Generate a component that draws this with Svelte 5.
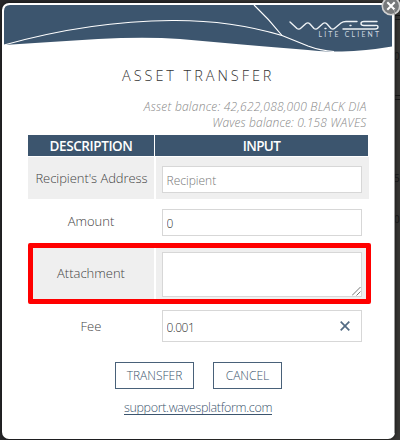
<script>
  let recipient = $state('');
  let amount = $state('0');
  let attachment = $state('');
  let fee = $state('0.001');
</script>

<div class="page">
  <div class="behind" aria-hidden="true">
    <i style="top: 15px"></i><b style="top: 50px">0</b><i style="top: 95px"></i>
    <b style="top: 172px">5</b><b style="top: 213px">0</b>
  </div>
  <div class="modal">
    <header>
      <svg width="388" height="48" viewBox="4 5 388 48">
        <path fill="#3c556e" d="M4 11Q4 5 10 5H392V46.500Q365 51 342 51.500Q325 52 296 49Q258 46 225 43L180 39Q145 36.500 98 39Q50 42 4 45Z" />
        <g fill="none" stroke="#fff">
          <path stroke-width="1.200" d="M4 45Q90 21 172 20.500Q230 20 282 35.500L308 46Q320 50.500 334 51.500" />
          <path stroke-width="1.200" d="M254 5Q269 19 282 35.500" />
          <path stroke="#eef2f5" stroke-width="1.400" stroke-linecap="round" stroke-linejoin="round" d="M290 22L297 28.500Q299 30 301 28L306 23.500Q308 22 310 24L314 28.500Q316 30 318 28L323 23.500Q325 22 327 24L331 28.500Q333 30 335 28L341 23Q343 21.500 346 21.500H357M343 29H375Q378 29 378 27T375 25.500H364Q361 25.500 361 23.500T364 21.500H377M350 25.500H351M325 28.500H326" />
        </g>
        <text x="318.500" y="36.500" textLength="60.500" fill="#d0d9e1">LITE CLIENT</text>
      </svg>
    </header>
    <button class="close" aria-label="Close">
      <svg width="20" height="20" viewBox="0 0 20 20">
        <circle cx="10" cy="10" r="8.700" fill="#77797b" stroke="#d2d2d2" stroke-width="1.600" />
        <path d="M6.300 6.300L13.700 13.700M13.700 6.300L6.300 13.700" stroke="#fff" stroke-width="2" />
      </svg>
    </button>

    <h1><span>ASSET TRANSFER</span></h1>
    <div class="balances">
      <p class="asset">Asset balance: 42,622,088,000 BLACK DIA</p>
      <p class="waves">Waves balance: 0.158 WAVES</p>
    </div>

    <div class="table">
      <div class="row head"><div class="desc">DESCRIPTION</div><div class="cell">INPUT</div></div>
      <div class="row recipient shaded">
        <div class="desc">Recipient's Address</div>
        <div class="cell"><input placeholder="Recipient" bind:value={recipient} /></div>
      </div>
      <div class="row amount">
        <div class="desc">Amount</div>
        <div class="cell"><input bind:value={amount} /></div>
      </div>
      <div class="row attachment shaded">
        <div class="desc">Attachment</div>
        <div class="cell">
          <div class="area">
            <textarea bind:value={attachment}></textarea>
            <svg width="9" height="9" viewBox="0 0 9 9"><path d="M0 8.500L8.500 0M4.500 8.500L8.500 4.500" stroke="#777" fill="none" /></svg>
          </div>
        </div>
        <div class="highlight"></div>
      </div>
      <div class="row fee">
        <div class="desc">Fee</div>
        <div class="cell">
          <div class="feebox">
            <input bind:value={fee} />
            <svg width="10" height="10" viewBox="0 0 10 10"><path d="M.7 .7L9.300 9.300M9.300 .7L.7 9.300" stroke="#536b84" stroke-width="1.700" /></svg>
          </div>
        </div>
      </div>
    </div>

    <div class="buttons">
      <button class="transfer">TRANSFER</button>
      <button class="cancel">CANCEL</button>
    </div>
    <footer><a href="#support">support.wavesplatform.com</a></footer>
  </div>
</div>

<style>
  :global(body) { margin: 0; overflow: hidden; }
  * { box-sizing: border-box; }
  .page {
    position: relative; width: 400px; height: 440px; padding: 3px 0 0 2px; overflow: hidden;
    background: linear-gradient(90deg, #28282b 0 50%, #373634 50%);
    font-family: "Open Sans", "Noto Sans", sans-serif; font-weight: 300; color: #444;
  }
  .behind b, .behind i { position: absolute; left: 394px; font-size: 10px; line-height: 12px; color: #171717; font-weight: 400; }
  .behind i { width: 8px; height: 5px; border: 1px solid #171717; }
  .modal {
    position: relative; width: 393px; height: 436px; background: #fff; border-radius: 7px;
    box-shadow: 0 0 4px #111; padding: 2px 0 0 2px; display: flex; flex-direction: column;
  }
  .modal::after { content: ""; position: absolute; inset: 6px 0 6px auto; width: 1px; background: #999; }
  header { height: 48px; }
  header svg { display: block; }
  header text { font: 400 6.800px Lato, sans-serif; }
  .close { position: absolute; left: 379px; top: -7px; width: 20px; height: 20px; padding: 0; border: 0; background: none; }
  .close svg { display: block; }
  h1 { margin: 11px 0 0; height: 24px; padding-left: 118px; font-size: 14.500px; line-height: 24px; font-weight: 300; color: #333; letter-spacing: 2.950px; white-space: nowrap; }
  .balances { height: 47px; padding: 11px 28.500px 0 0; text-align: right; font-size: 12px; font-style: italic; color: #888; }
  .balances p { margin: 0; line-height: 16px; height: 16px; white-space: nowrap; }
  .asset { letter-spacing: .22px; }
  .waves { letter-spacing: .14px; }
  .table { width: 342px; margin-left: 24px; }
  .row { display: flex; gap: 2px; position: relative; }
  .desc { width: 126px; display: flex; align-items: center; justify-content: center; font-size: 13px; white-space: nowrap; }
  .cell { width: 213px; display: flex; align-items: center; padding-left: 5.500px; }
  .head { height: 21px; margin-bottom: 1px; gap: 1px; }
  .head > div { background: #3c556e; color: #fff; font-weight: 600; font-size: 13.500px; letter-spacing: -.4px; justify-content: center; padding: 0; }
  .head > .cell { letter-spacing: -.6px; }
  .shaded > .desc, .shaded > .cell { background: #efefef; }
  .recipient { height: 42px; }
  .recipient .desc { letter-spacing: -.06px; padding-left: 1px; }
  .recipient .cell { padding-top: 3px; }
  .amount { height: 48px; }
  .amount .desc { padding-bottom: 4px; }
  .amount .cell { padding-bottom: 1px; }
  .attachment { height: 52px; }
  .attachment .cell { padding-top: 3px; }
  .fee { height: 52px; }
  .fee .desc { padding-top: 2px; }
  .fee .cell { padding-top: 2px; }
  input, textarea {
    display: block; width: 200.500px; height: 27px; margin: 0; padding: 2px 4px 0; border: 1px solid #d7d7d7;
    border-radius: 0; background: #fff; color: #333; font: 300 12px "Open Sans", sans-serif; outline: 0;
  }
  input::placeholder { color: #777; opacity: 1; }
  .area { position: relative; height: 45px; }
  textarea { height: 45px; resize: none; }
  .area svg { position: absolute; right: 1px; bottom: 1px; }
  .highlight { position: absolute; left: 0; top: -4px; width: 343px; height: 61px; border: 5px solid #f00; border-radius: 2px; }
  .feebox { position: relative; }
  .feebox input { height: 32px; letter-spacing: -.5px; }
  .feebox svg { position: absolute; right: 12px; top: 11px; }
  .buttons { display: flex; gap: 19px; padding-left: 111px; margin-top: 11px; }
  .buttons button { height: 27px; padding: 0; border: 1px solid #496179; background: #fff; color: #3c556e; font: 300 12px "Open Sans", sans-serif; }
  .transfer { width: 79px; }
  .cancel { width: 69px; }
  footer { height: 30px; padding: 10px 0 0 120px; line-height: 18px; font-size: 12.500px; letter-spacing: -.35px; }
  a { color: #3c556e; text-decoration: none; display: inline-block; height: 15px; border-bottom: 1px solid #3c556e; line-height: 16px; white-space: nowrap; }
</style>
